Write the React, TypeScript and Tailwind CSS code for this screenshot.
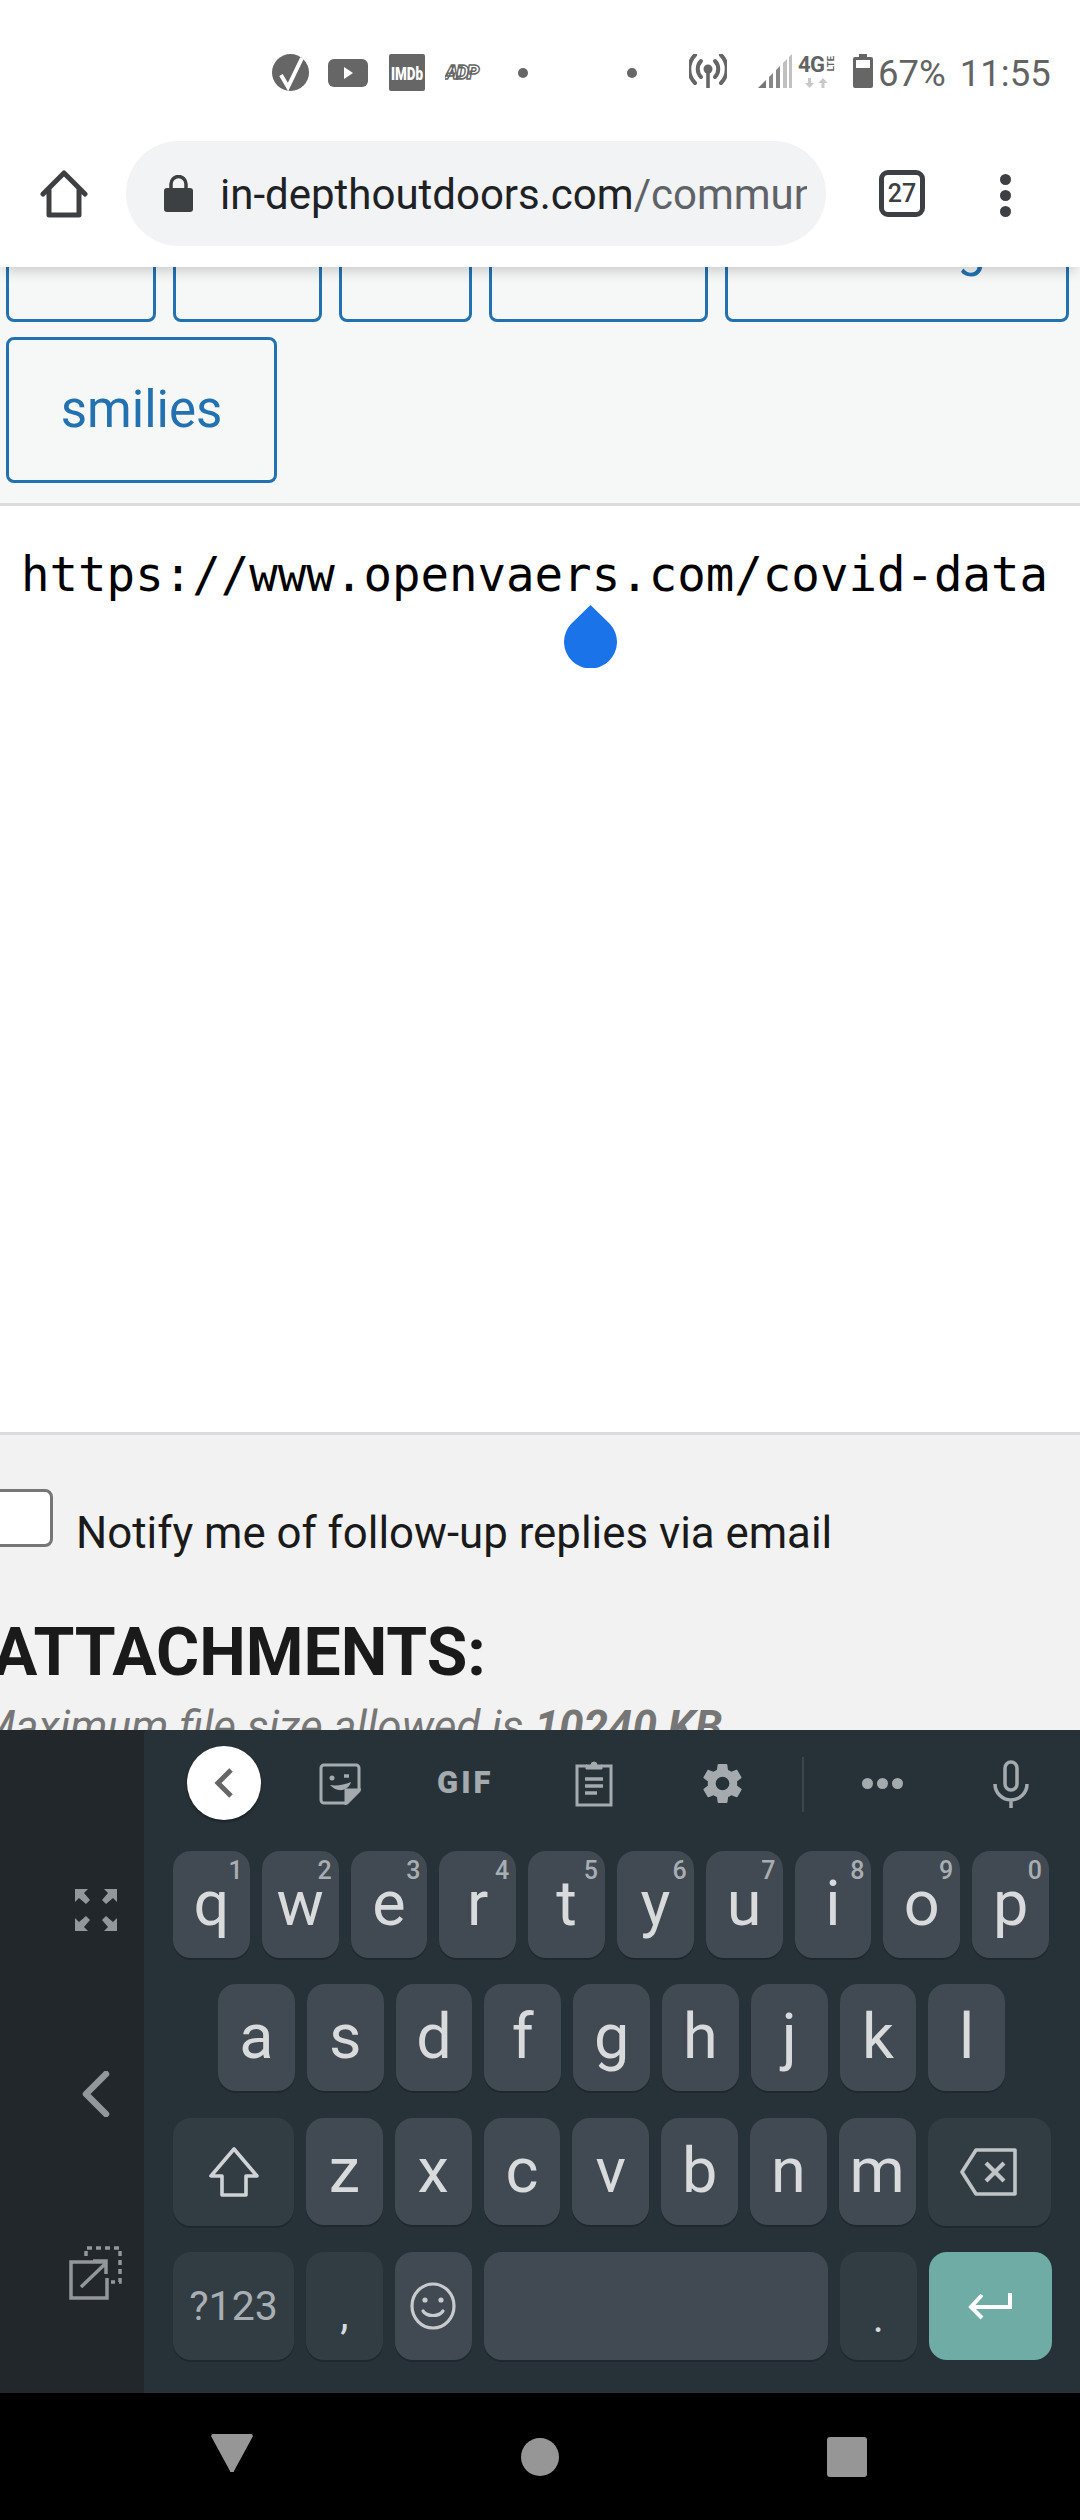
import React from 'react';

const topRow = [
  ['q', '1'], ['w', '2'], ['e', '3'], ['r', '4'], ['t', '5'],
  ['y', '6'], ['u', '7'], ['i', '8'], ['o', '9'], ['p', '0'],
];
const midRow = ['a', 's', 'd', 'f', 'g', 'h', 'j', 'k', 'l'];
const lowRow = ['z', 'x', 'c', 'v', 'b', 'n', 'm'];

function Key({ label, hint }: { label: string; hint?: string }) {
  return (
    <div className="relative flex h-[107px] w-[76.8px] items-center justify-center rounded-[18px] bg-[#414a52] pb-[2px] text-[63px] leading-none text-[#d8dadc] shadow-[0_2px_0_#20282d]">
      {label}
      {hint && <span className="absolute right-[7px] top-[8px] text-[25px] font-medium leading-[24px] text-[#a8aeb2]">{hint}</span>}
    </div>
  );
}

function FnKey({ children, width }: { children: React.ReactNode; width: string }) {
  return (
    <div className={`flex h-[108px] items-center justify-center rounded-[18px] bg-[#313c43] shadow-[0_2px_0_#20282d] ${width}`}>
      {children}
    </div>
  );
}

function StatusBar() {
  return (
    <div className="flex h-[141px] items-start bg-white pl-[272px] pt-[54px] text-[#636363]">
      <svg width="37" height="37" viewBox="0 0 37 37">
        <circle cx="18.5" cy="18.5" r="18.5" fill="#666" />
        <path d="M9 21l7 12L30 4" fill="none" stroke="#fff" strokeWidth="4" />
      </svg>
      <svg className="ml-[19px] mt-[5px]" width="40" height="28" viewBox="0 0 40 28">
        <rect width="40" height="28" rx="6" fill="#666" />
        <path d="M16 8l9 6-9 6z" fill="#fff" />
      </svg>
      <svg className="ml-[21px]" width="36" height="37" viewBox="0 0 36 37">
        <rect width="36" height="37" rx="2" fill="#666" />
        <text transform="translate(18 25.5) scale(1 1.4)" textAnchor="middle" fontFamily="Roboto" fontWeight="900" fontSize="13.5" fill="#fff">IMDb</text>
      </svg>
      <svg className="ml-[20px] mt-[8px]" width="39" height="20" viewBox="0 0 39 20">
        <text x="0" y="17" fontFamily="Roboto" fontStyle="italic" fontWeight="900" fontSize="20" fill="#fff" stroke="#666" strokeWidth="1.4" letterSpacing="-2">ADP</text>
      </svg>
      <div className="ml-[34px] mt-[14px] h-[10px] w-[10px] rounded-full bg-[#666666]" />
      <div className="ml-[99px] mt-[14px] h-[10px] w-[10px] rounded-full bg-[#666666]" />
      <svg className="ml-[52px]" width="38" height="34" viewBox="0 0 38 34" fill="none" stroke="#666" strokeWidth="4" strokeLinecap="round">
        <circle cx="19" cy="15" r="4.5" fill="#666" stroke="none" />
        <path d="M19 16v18" strokeWidth="3.6" strokeLinecap="butt" />
        <path d="M12 23a11.5 11.5 0 0 1 0-16M26 23a11.5 11.5 0 0 0 0-16" />
        <path d="M6 29a20 20 0 0 1 0-28M32 29a20 20 0 0 0 0-28" />
      </svg>
      <svg className="ml-[31px]" width="35" height="34" viewBox="0 0 35 34">
        <path d="M0 34L8 26V34z" fill="#777" />
        <path d="M11 23L15 19V34H11z" fill="#888" />
        <path d="M18 16L22 12V34H18z" fill="#888" />
        <path d="M25 9L29 5V34H25z" fill="#c0c0c0" />
        <path d="M31 3L34 0V34H31z" fill="#c0c0c0" />
      </svg>
      <div className="relative ml-[5px] h-[34px] w-[40px]">
        <span className="absolute left-0 top-0 text-[22px] font-bold leading-[22px] tracking-[-0.5px]">4G</span>
        <span className="absolute left-[29px] top-[2px] rotate-180 text-[9.5px] font-bold leading-[8px] [writing-mode:vertical-rl]">LTE</span>
        <svg className="absolute left-[7px] top-[24px]" width="24" height="10" viewBox="0 0 24 10" fill="#c8c8c8">
          <path d="M3 0h3v5h3l-4.5 5L0 5h3z" />
          <path d="M18 0l4.5 5h-3v5h-3V5h-3z" />
        </svg>
      </div>
      <svg className="ml-[15px]" width="20" height="34" viewBox="0 0 20 34">
        <path d="M6 0h8v3h4a2 2 0 0 1 2 2v27a2 2 0 0 1-2 2H2a2 2 0 0 1-2-2V5a2 2 0 0 1 2-2h4z" fill="#666" />
        <rect x="3" y="6" width="14" height="8" fill="#fff" />
      </svg>
      <span className="ml-[5px] mt-[-2px] text-[36.5px] leading-[44px]">67%</span>
      <span className="ml-[14px] mt-[-2px] text-[36.5px] leading-[44px]">11:55</span>
    </div>
  );
}

function BrowserBar() {
  return (
    <div className="relative z-10 flex h-[126px] items-start bg-white pl-[40px] shadow-[0_8px_12px_-4px_rgba(0,0,0,0.18)]">
      <svg className="mt-[29px]" width="48" height="48" viewBox="0 0 48 48" fill="none" stroke="#3c4043" strokeWidth="5" strokeLinecap="round" strokeLinejoin="round">
        <path d="M3 24L24 3l21 21M9 20v25h30V20" />
      </svg>
      <div className="ml-[38px] flex h-[105px] w-[700px] items-center rounded-full bg-[#f1f3f4] pl-[38px]">
        <svg className="shrink-0" width="29" height="37" viewBox="0 0 29 37">
          <path d="M7 14V9a7.5 7.5 0 0 1 15 0v5" fill="none" stroke="#3c4043" strokeWidth="3.5" />
          <rect y="13" width="29" height="24" rx="3" fill="#3c4043" />
        </svg>
        <span className="ml-[27px] mt-[2px] w-[587px] shrink-0 overflow-hidden whitespace-nowrap text-[42px] leading-[52px] text-[#202124]">
          in-depthoutdoors.com<span className="text-[#5f6368]">/community</span>
        </span>
      </div>
      <div className="ml-[53px] mt-[29px] flex h-[47px] w-[46px] items-center justify-center rounded-[9px] border-[5px] border-[#3c4043] text-[25px] font-medium leading-none text-[#3c4043]">27</div>
      <div className="ml-[75px] mt-[33px] flex flex-col gap-[5px]">
        <div className="h-[11px] w-[11px] rounded-full bg-[#3c4043]" />
        <div className="h-[11px] w-[11px] rounded-full bg-[#3c4043]" />
        <div className="h-[11px] w-[11px] rounded-full bg-[#3c4043]" />
      </div>
    </div>
  );
}

function EditorToolbar() {
  const tag = 'rounded-[8px] border-[3px] border-[#2271b1] bg-[#f6f7f7] text-[#2271b1]';
  return (
    <div className="h-[239px] overflow-hidden border-b-[3px] border-[#dcdcde] bg-[#f6f7f7] pl-[6px]">
      <div className="mt-[-90px] flex h-[145px] gap-[17px]">
        <div className={`w-[150px] ${tag}`} />
        <div className={`w-[149px] ${tag}`} />
        <div className={`w-[133px] ${tag}`} />
        <div className={`w-[219px] ${tag}`} />
        <div className={`relative w-[344px] ${tag}`}>
          <span className="absolute bottom-[42px] right-[80px] text-[51px] leading-[58px]">g</span>
        </div>
      </div>
      <div className={`mt-[15px] flex h-[146px] w-[271px] items-center justify-center pb-[2px] text-[51px] leading-none ${tag}`}>smilies</div>
    </div>
  );
}

function Keyboard() {
  return (
    <div className="flex h-[663px] shrink-0 overflow-hidden bg-[#21272b]">
      <div className="flex w-[144px] shrink-0 flex-col items-center pl-[48px] pt-[159px]">
        <svg width="42" height="42" viewBox="0 0 42 42" fill="#92979a">
          <path d="M0 0h13L9 4l6 7-4 4-7-6-4 4zM42 0H29l4 4-6 7 4 4 7-6 4 4zM0 42h13l-4-4 6-7-4-4-7 6-4-4zM42 42H29l4-4-6-7 4-4 7 6 4-4z" />
        </svg>
        <svg className="mt-[140px]" width="28" height="46" viewBox="0 0 28 46" fill="none" stroke="#92979a" strokeWidth="6.5" strokeLinecap="round" strokeLinejoin="round">
          <path d="M24 3L4 23l20 20" />
        </svg>
        <svg className="mt-[129px]" width="54" height="54" viewBox="0 0 54 54" fill="none" stroke="#92979a" strokeWidth="3.5">
          <path d="M36 16H2v36h36V32" />
          <path d="M12 41L36 18M24 15h13v13" />
          <path d="M17 10V2h34v34h-9" strokeDasharray="5 4" />
        </svg>
      </div>
      <div className="flex-1 rounded-tl-[4px] bg-[#273238]">
        <div className="relative flex h-[121px] items-center">
          <div className="absolute left-[43px] top-[16px] flex h-[74px] w-[74px] items-center justify-center rounded-full bg-white shadow-[0_2px_3px_rgba(0,0,0,0.35)]">
            <svg width="20" height="32" viewBox="0 0 20 32" fill="none" stroke="#666" strokeWidth="5">
              <path d="M17 3L4 16l13 13" />
            </svg>
          </div>
          <svg className="absolute left-[175px] top-[33px]" width="42" height="42" viewBox="0 0 42 42" fill="none" stroke="#a4aaad" strokeWidth="3">
            <path d="M28 40H5a3 3 0 0 1-3-3V5a3 3 0 0 1 3-3h32a3 3 0 0 1 3 3v23z" />
            <path d="M27 40V27h13z" fill="#a4aaad" />
            <circle cx="13" cy="15" r="2.5" fill="#a4aaad" stroke="none" />
            <path d="M25 13h5" strokeWidth="3.5" />
            <path d="M11 22c6 1 14 0 21-3-2 8-13 12-21 3z" fill="#a4aaad" stroke="none" />
          </svg>
          <span className="absolute left-[293px] top-[38px] text-[31px] font-black leading-[30px] tracking-[3px] text-[#a4aaad]">GIF</span>
          <svg className="absolute left-[431px] top-[30px]" width="38" height="47" viewBox="0 0 38 47" fill="none" stroke="#a4aaad" strokeWidth="3">
            <path d="M12 6H2v39h34V6H26" />
            <path d="M11 9V5h5a3 3 0 0 1 6 0h5v4z" fill="#a4aaad" strokeWidth="1" />
            <path d="M10 19h18M10 26h18M10 33h12" strokeWidth="3.6" />
          </svg>
          <svg className="absolute left-[555px] top-[29px]" width="47" height="49" viewBox="0 0 24 24" fill="#a4aaad">
            <path d="M19.4 13c.04-.32.1-.66.1-1s-.06-.68-.1-1l2.1-1.65c.2-.15.25-.42.12-.64l-2-3.46c-.12-.22-.4-.3-.6-.22l-2.5 1c-.52-.4-1.08-.73-1.7-.98l-.37-2.65A.5.5 0 0 0 14 2h-4a.5.5 0 0 0-.5.42l-.37 2.65c-.62.25-1.18.58-1.7.98l-2.5-1c-.22-.08-.48 0-.6.22l-2 3.46c-.13.22-.07.49.12.64L4.57 11c-.04.32-.07.66-.07 1s.03.68.07 1l-2.1 1.65c-.2.15-.25.42-.12.64l2 3.46c.12.22.4.3.6.22l2.5-1c.52.4 1.08.73 1.7.98l.37 2.65c.04.24.25.42.5.42h4c.25 0 .46-.18.5-.42l.37-2.65c.62-.25 1.18-.58 1.7-.98l2.5 1c.22.08.48 0 .6-.22l2-3.46c.12-.22.07-.49-.12-.64zM12 15.5a3.5 3.5 0 1 1 0-7 3.5 3.5 0 0 1 0 7z" />
          </svg>
          <div className="absolute left-[658px] top-[27px] h-[55px] w-[2px] bg-[#3a464d]" />
          <div className="absolute left-[718px] top-[48px] flex gap-[4px]">
            <div className="h-[11px] w-[11px] rounded-full bg-[#a4aaad]" />
            <div className="h-[11px] w-[11px] rounded-full bg-[#a4aaad]" />
            <div className="h-[11px] w-[11px] rounded-full bg-[#a4aaad]" />
          </div>
          <svg className="absolute left-[849px] top-[30px]" width="36" height="48" viewBox="0 0 36 48" fill="none" stroke="#a4aaad" strokeWidth="3.5">
            <rect x="12" y="2" width="12" height="28" rx="6" />
            <path d="M2 24a16 16 0 0 0 32 0M18 40v8" />
          </svg>
        </div>
        <div className="flex flex-col gap-[26px] pl-[29px]">
          <div className="flex gap-[12px]">
            {topRow.map(([k, n]) => <Key key={k} label={k} hint={n} />)}
          </div>
          <div className="flex gap-[12px] pl-[45px]">
            {midRow.map(k => <Key key={k} label={k} />)}
          </div>
          <div className="mt-[1px] flex gap-[12px]">
            <FnKey width="w-[121px]">
              <svg width="52" height="50" viewBox="0 0 52 50" fill="none" stroke="#d0d3d5" strokeWidth="3.6" strokeLinejoin="round">
                <path d="M26 2L3 29h11v19h24V29h11z" />
              </svg>
            </FnKey>
            {lowRow.map(k => <Key key={k} label={k} />)}
            <FnKey width="w-[123px]">
              <svg width="58" height="48" viewBox="0 0 58 48" fill="none" stroke="#c0c4c6" strokeWidth="3.6" strokeLinejoin="round">
                <path d="M16 2h39v44H16L2 24z" />
                <path d="M26 15l18 18M44 15L26 33" strokeWidth="4.2" />
              </svg>
            </FnKey>
          </div>
          <div className="flex gap-[12px]">
            <FnKey width="w-[121px]">
              <span className="text-[41px] leading-none text-[#a8aeb2]">?123</span>
            </FnKey>
            <FnKey width="w-[76.8px]">
              <span className="mt-[18px] text-[42px] leading-none text-[#d8dadc]">,</span>
            </FnKey>
            <div className="flex h-[108px] w-[76.8px] items-center justify-center rounded-[18px] bg-[#414a52] shadow-[0_2px_0_#20282d]">
              <svg width="46" height="48" viewBox="0 0 46 48" fill="none" stroke="#c8cbcd" strokeWidth="3.2" strokeLinecap="round">
                <ellipse cx="23" cy="24" rx="21" ry="22" />
                <circle cx="15" cy="18" r="2.6" fill="#c8cbcd" stroke="none" />
                <circle cx="31" cy="18" r="2.6" fill="#c8cbcd" stroke="none" />
                <path d="M13 29c4 6 16 6 20 0" />
              </svg>
            </div>
            <div className="h-[108px] w-[344px] rounded-[18px] bg-[#414a52] shadow-[0_2px_0_#20282d]" />
            <FnKey width="w-[77.6px]">
              <span className="mt-[24px] text-[42px] leading-none text-[#d8dadc]">.</span>
            </FnKey>
            <div className="flex h-[108px] w-[122.4px] items-center justify-center rounded-[18px] bg-[#6eaca5]">
              <svg width="44" height="28" viewBox="0 0 44 28" fill="none" stroke="#fff" strokeWidth="4">
                <path d="M42 1v14H4M14 3L3 15l11 11" />
              </svg>
            </div>
          </div>
        </div>
      </div>
    </div>
  );
}

export default function App() {
  return (
    <div className="flex h-[2520px] w-[1080px] flex-col overflow-hidden bg-white font-['Roboto',sans-serif]">
      <StatusBar />
      <BrowserBar />
      <EditorToolbar />
      <div className="relative flex h-[926px] shrink-0 flex-col bg-white pl-[21px] pt-[40px]">
        <span className="font-['DejaVu_Sans_Mono',monospace] text-[47.4px] leading-[58px] text-black">https://www.openvaers.com/covid-data</span>
        <svg className="absolute left-[564px] top-[99px]" width="53" height="63" viewBox="0 0 53 63">
          <path d="M26.5 0L46 19A26.5 26.5 0 1 1 7 19z" fill="#1a73e8" />
        </svg>
      </div>
      <div className="flex-1 overflow-hidden border-t-[3px] border-[#dcdcde] bg-[#f2f2f2]">
        <div className="ml-[-8px] mt-[54px] flex items-end">
          <div className="h-[58px] w-[61px] rounded-[8px] border-[3px] border-[#767676] bg-white" />
          <span className="mb-[-12px] ml-[23px] text-[43.8px] leading-[52px] text-[#1a1a1a]">Notify me of follow-up replies via email</span>
        </div>
        <div className="ml-[-7px] mt-[68px] text-[66px] font-bold leading-[76px] text-[#1a1a1a]">ATTACHMENTS:</div>
        <div className="ml-[-22px] mt-[11px] text-[44px] italic leading-[50px] text-[#767676]">Maximum file size allowed is <b>10240 KB</b></div>
      </div>
      <Keyboard />
      <div className="flex h-[127px] shrink-0 items-center bg-black pl-[211px]">
        <svg className="mb-[8px]" width="42" height="38" viewBox="0 0 42 38">
          <path d="M2 0h38a2 2 0 0 1 1.5 3L23 37a2 2 0 0 1-4 0L.5 3A2 2 0 0 1 2 0z" fill="#969696" />
        </svg>
        <div className="ml-[268px] h-[38px] w-[38px] rounded-full bg-[#969696]" />
        <div className="ml-[268px] h-[40px] w-[40px] rounded-[3px] bg-[#969696]" />
      </div>
    </div>
  );
}
